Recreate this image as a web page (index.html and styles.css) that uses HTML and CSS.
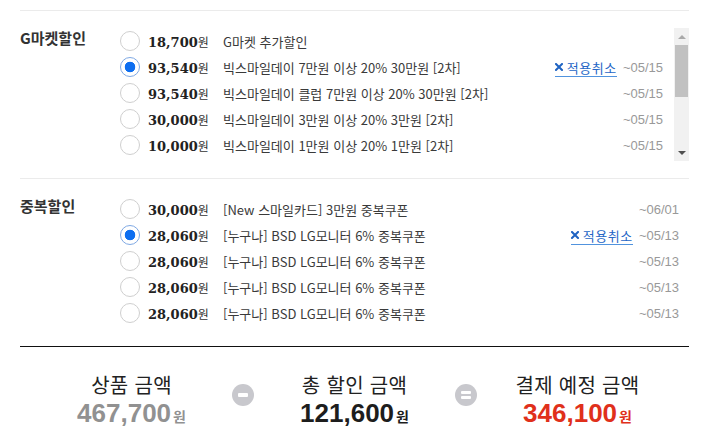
FILE: index.html
```html
<!DOCTYPE html>
<html lang="ko">
<head>
<meta charset="utf-8">
<title>할인 선택</title>
<link rel="stylesheet" href="styles.css">
</head>
<body>
<div class="wrap">
  <section class="group">
    <h3 class="group-title">G마켓할인</h3>
    <div class="scroll-box">
      <ul class="list list-scroll">
        <li class="row">
          <span class="radio"></span>
          <span class="amount"><b>18,700</b>원</span>
          <span class="desc">G마켓 추가할인</span>
        </li>
        <li class="row">
          <span class="radio on"></span>
          <span class="amount"><b>93,540</b>원</span>
          <span class="desc">빅스마일데이 7만원 이상 20% 30만원 [2차]</span>
          <a class="cancel" href="#"><svg class="x-ico" viewBox="0 0 8 8" width="8" height="8"><path d="M1 1L7 7M7 1L1 7" stroke="#1f63c2" stroke-width="2" stroke-linecap="square"/></svg>적용취소</a>
          <span class="date">~05/15</span>
        </li>
        <li class="row">
          <span class="radio"></span>
          <span class="amount"><b>93,540</b>원</span>
          <span class="desc">빅스마일데이 클럽 7만원 이상 20% 30만원 [2차]</span>
          <span class="date">~05/15</span>
        </li>
        <li class="row">
          <span class="radio"></span>
          <span class="amount"><b>30,000</b>원</span>
          <span class="desc">빅스마일데이 3만원 이상 20% 3만원 [2차]</span>
          <span class="date">~05/15</span>
        </li>
        <li class="row">
          <span class="radio"></span>
          <span class="amount"><b>10,000</b>원</span>
          <span class="desc">빅스마일데이 1만원 이상 20% 1만원 [2차]</span>
          <span class="date">~05/15</span>
        </li>
      </ul>
      <div class="scrollbar">
        <span class="sb-btn"><i class="tri up"></i></span>
        <span class="sb-thumb"></span>
        <span class="sb-track"></span>
        <span class="sb-btn"><i class="tri down"></i></span>
      </div>
    </div>
  </section>

  <section class="group">
    <h3 class="group-title">중복할인</h3>
    <ul class="list">
      <li class="row">
        <span class="radio"></span>
        <span class="amount"><b>30,000</b>원</span>
        <span class="desc">[New 스마일카드] 3만원 중복쿠폰</span>
        <span class="date">~06/01</span>
      </li>
      <li class="row">
        <span class="radio on"></span>
        <span class="amount"><b>28,060</b>원</span>
        <span class="desc">[누구나] BSD LG모니터 6% 중복쿠폰</span>
        <a class="cancel" href="#"><svg class="x-ico" viewBox="0 0 8 8" width="8" height="8"><path d="M1 1L7 7M7 1L1 7" stroke="#1f63c2" stroke-width="2" stroke-linecap="square"/></svg>적용취소</a>
        <span class="date">~05/13</span>
      </li>
      <li class="row">
        <span class="radio"></span>
        <span class="amount"><b>28,060</b>원</span>
        <span class="desc">[누구나] BSD LG모니터 6% 중복쿠폰</span>
        <span class="date">~05/13</span>
      </li>
      <li class="row">
        <span class="radio"></span>
        <span class="amount"><b>28,060</b>원</span>
        <span class="desc">[누구나] BSD LG모니터 6% 중복쿠폰</span>
        <span class="date">~05/13</span>
      </li>
      <li class="row">
        <span class="radio"></span>
        <span class="amount"><b>28,060</b>원</span>
        <span class="desc">[누구나] BSD LG모니터 6% 중복쿠폰</span>
        <span class="date">~05/13</span>
      </li>
    </ul>
  </section>

  <div class="summary">
    <div class="sum-col">
      <div class="sum-title">상품 금액</div>
      <div class="sum-value gray"><b>467,700</b>원</div>
    </div>
    <div class="op"><span class="op-circle minus"><i></i></span></div>
    <div class="sum-col">
      <div class="sum-title">총 할인 금액</div>
      <div class="sum-value dark"><b>121,600</b>원</div>
    </div>
    <div class="op"><span class="op-circle equals"><i></i><i></i></span></div>
    <div class="sum-col">
      <div class="sum-title">결제 예정 금액</div>
      <div class="sum-value red"><b>346,100</b>원</div>
    </div>
  </div>
</div>
</body>
</html>
```

FILE: styles.css
```css
* { box-sizing: border-box; }

body {
  margin: 0;
  background: #fff;
  font-family: "Noto Sans CJK KR", "Noto Sans", sans-serif;
  color: #333;
}

.wrap {
  padding: 10px 13px 0 20px;
}

.group {
  display: flex;
  align-items: flex-start;
  border-top: 1px solid #ebebeb;
  padding: 17px 0 17px;
}

.group + .group {
  padding-bottom: 20px;
}

.group-title {
  flex: none;
  width: 100px;
  margin: 0;
  font-size: 15px;
  line-height: 20px;
  font-weight: bold;
  color: #333;
}

.scroll-box {
  flex: 1;
  display: flex;
  height: 133px;
}

.list {
  flex: 1;
  list-style: none;
  margin: 0;
  padding: 0 10px 0 0;
}

.list-scroll {
  height: 133px;
  overflow: hidden;
  padding-right: 11px;
}

.row {
  display: flex;
  align-items: center;
  height: 26px;
  white-space: nowrap;
}

.radio {
  flex: none;
  width: 20px;
  height: 20px;
  margin-right: 8px;
  border: 1px solid #cfcfcf;
  border-radius: 50%;
  background: #fff;
}

.radio.on {
  border-color: #7fa9e4;
  background: radial-gradient(circle, #0d6ef0 0 5px, #fff 5.6px);
}

.amount {
  flex: none;
  width: 75px;
  font-size: 12px;
  color: #333;
}

.amount b {
  font-family: "DejaVu Serif", "Liberation Serif", serif;
  font-size: 13px;
  font-weight: bold;
  color: #222;
}

.desc {
  flex: 1;
  font-size: 13px;
  color: #3a3a3a;
}

.cancel {
  display: inline-flex;
  align-items: center;
  gap: 4px;
  height: 18px;
  margin-top: 1px;
  font-size: 13px;
  letter-spacing: 0.6px;
  color: #2466c6;
  text-decoration: none;
  border-bottom: 1px solid #5193de;
}

.x-ico {
  display: block;
  flex: none;
}

.date {
  flex: none;
  margin-left: 6px;
  font-family: "Liberation Sans", "DejaVu Sans", sans-serif;
  font-size: 13px;
  color: #999;
}

.scrollbar {
  flex: none;
  width: 15px;
  height: 133px;
  display: flex;
  flex-direction: column;
  background: #f1f1f1;
}

.sb-btn {
  flex: none;
  height: 17px;
  display: flex;
  align-items: center;
  justify-content: center;
}

.sb-thumb {
  flex: none;
  height: 52px;
  margin: 0 1px;
  background: #c1c1c1;
}

.sb-track { flex: 1; }

.tri {
  display: block;
  width: 0;
  height: 0;
  border-left: 4px solid transparent;
  border-right: 4px solid transparent;
}

.tri.up { border-bottom: 4px solid #a9a9a9; }
.tri.down { border-top: 4px solid #505050; }

.summary {
  display: flex;
  align-items: flex-start;
  border-top: 1px solid #111;
  padding-top: 23px;
}

.sum-col {
  flex: 1;
  text-align: center;
}

.sum-title {
  font-size: 20px;
  line-height: 29px;
  letter-spacing: 0.3px;
  color: #222;
}

.sum-value {
  line-height: 29px;
  font-size: 14px;
  font-weight: bold;
}

.sum-value b {
  margin-right: 2px;
  font-family: "Liberation Sans", "DejaVu Sans", sans-serif;
  font-size: 26px;
}

.sum-value.gray { color: #919191; }
.sum-value.dark { color: #1d1d1d; }
.sum-value.red { color: #e0301b; }

.op {
  flex: none;
  width: 0;
  display: flex;
  justify-content: center;
  margin-top: 14px;
}

.op-circle {
  flex: none;
  width: 22px;
  height: 22px;
  border-radius: 50%;
  background: #c8c8cd;
  display: flex;
  flex-direction: column;
  align-items: center;
  justify-content: center;
  gap: 2px;
}

.op-circle i {
  display: block;
  width: 10px;
  height: 4px;
  border-radius: 1px;
  background: #fff;
}

.op-circle.equals i {
  height: 3px;
}
```
